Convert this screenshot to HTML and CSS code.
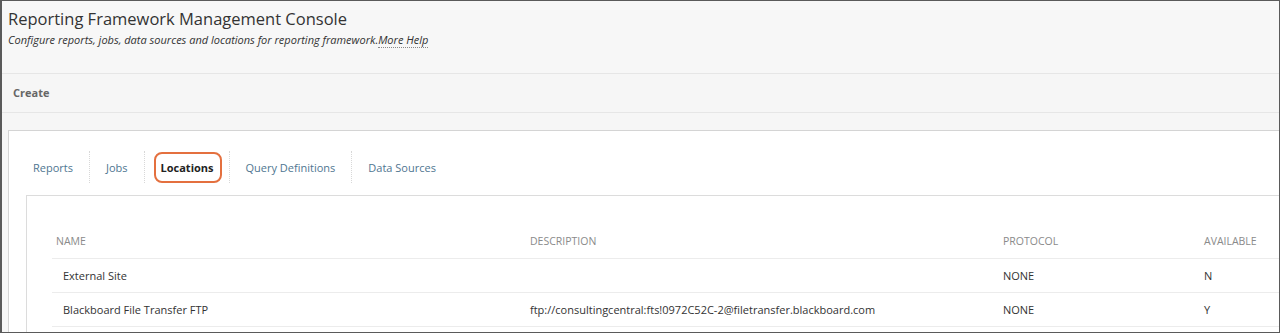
FILE: index.html
```html
<!DOCTYPE html>
<html lang="en">
<head>
    <meta charset="UTF-8">
    <title>Reporting Framework Management Console</title>
    <link rel="stylesheet" href="styles.css">
</head>
<body>
    <div class="frame">
        <div class="page-header">
            <h1 class="title">Reporting Framework Management Console</h1>
            <p class="subtitle">Configure reports, jobs, data sources and locations for reporting framework.<a class="help" href="#">More Help</a></p>
        </div>

        <div class="action-bar">
            <span class="action">Create</span>
        </div>

        <div class="panel">
            <ul class="tabs">
                <li class="tab">Reports</li>
                <li class="tab">Jobs</li>
                <li class="tab active"><span class="highlight">Locations</span></li>
                <li class="tab">Query Definitions</li>
                <li class="tab">Data Sources</li>
            </ul>

            <div class="content">
                <div class="table">
                    <div class="row head">
                        <div class="cell">Name</div>
                        <div class="cell">Description</div>
                        <div class="cell">Protocol</div>
                        <div class="cell">Available</div>
                    </div>
                    <div class="row">
                        <div class="cell name">External Site</div>
                        <div class="cell"></div>
                        <div class="cell">NONE</div>
                        <div class="cell">N</div>
                    </div>
                    <div class="row">
                        <div class="cell name">Blackboard File Transfer FTP</div>
                        <div class="cell">ftp://consultingcentral:fts!0972C52C-2@filetransfer.blackboard.com</div>
                        <div class="cell">NONE</div>
                        <div class="cell">Y</div>
                    </div>
                </div>
            </div>
        </div>
    </div>
</body>
</html>
```

FILE: styles.css
```css
html, body {
    margin: 0;
    padding: 0;
}

body {
    font-family: 'Open Sans', 'Noto Sans', sans-serif;
    color: #333;
    background-color: #fff;
}

.frame {
    height: 333px;
    box-sizing: border-box;
    border: 1px solid #5a5a5a;
    border-left-width: 2px;
    background-color: #f6f6f6;
    overflow: hidden;
}

.page-header {
    padding: 5px 6px 0;
    height: 67px;
    border-bottom: 1px solid #e6e6e6;
    background-color: #f7f7f7;
}

.title {
    margin: 0;
    font-size: 16.5px;
    font-weight: 400;
    line-height: 25px;
    color: #333;
}

.subtitle {
    margin: 0;
    font-size: 11px;
    font-style: italic;
    line-height: 17px;
    color: #333;
}

.help {
    color: #333;
    text-decoration: none;
    border-bottom: 1px dotted #888;
}

.action-bar {
    height: 38px;
    display: flex;
    align-items: center;
    padding-left: 11px;
    border-bottom: 1px solid #e6e6e6;
    background-color: #f6f6f6;
}

.action {
    font-size: 11px;
    font-weight: 700;
    color: #666;
    margin-top: -1px;
}

.panel {
    margin: 17px 0 0 6px;
    background-color: #fff;
    border-top: 1px solid #d4d4d4;
    border-left: 1px solid #d4d4d4;
    padding: 20px 0 0 17px;
    height: 300px;
}

.tabs {
    list-style: none;
    margin: 0;
    padding: 0;
    display: flex;
    align-items: center;
    height: 32px;
}

.tab {
    font-size: 11px;
    color: #4f7691;
    padding: 0 16px;
    height: 32px;
    display: flex;
    align-items: center;
    border-right: 1px dotted #d8d8d8;
}

.tab:first-child {
    padding-left: 7px;
}

.tab:last-child {
    border-right: none;
}

.tab.active {
    padding: 0 7px 0 9px;
}

.highlight {
    font-weight: 700;
    color: #222;
    border: 2px solid #e4703f;
    border-radius: 8px;
    padding: 6px 6px 6px 5px;
}

.content {
    margin-top: 12px;
    border-top: 1px solid #dcdcdc;
    border-left: 1px solid #dcdcdc;
    padding: 27px 0 0 25px;
    height: 200px;
}

.row {
    display: grid;
    grid-template-columns: 474px 473px 201px 1fr;
    height: 33px;
    align-items: center;
    border-bottom: 1px solid #ececec;
    font-size: 11px;
    color: #333;
}

.row.head {
    height: 35px;
    font-size: 10.5px;
    color: #8a8a8a;
    text-transform: uppercase;
}

.cell {
    padding-left: 4px;
    white-space: nowrap;
}

.cell.name {
    padding-left: 11px;
}
```
